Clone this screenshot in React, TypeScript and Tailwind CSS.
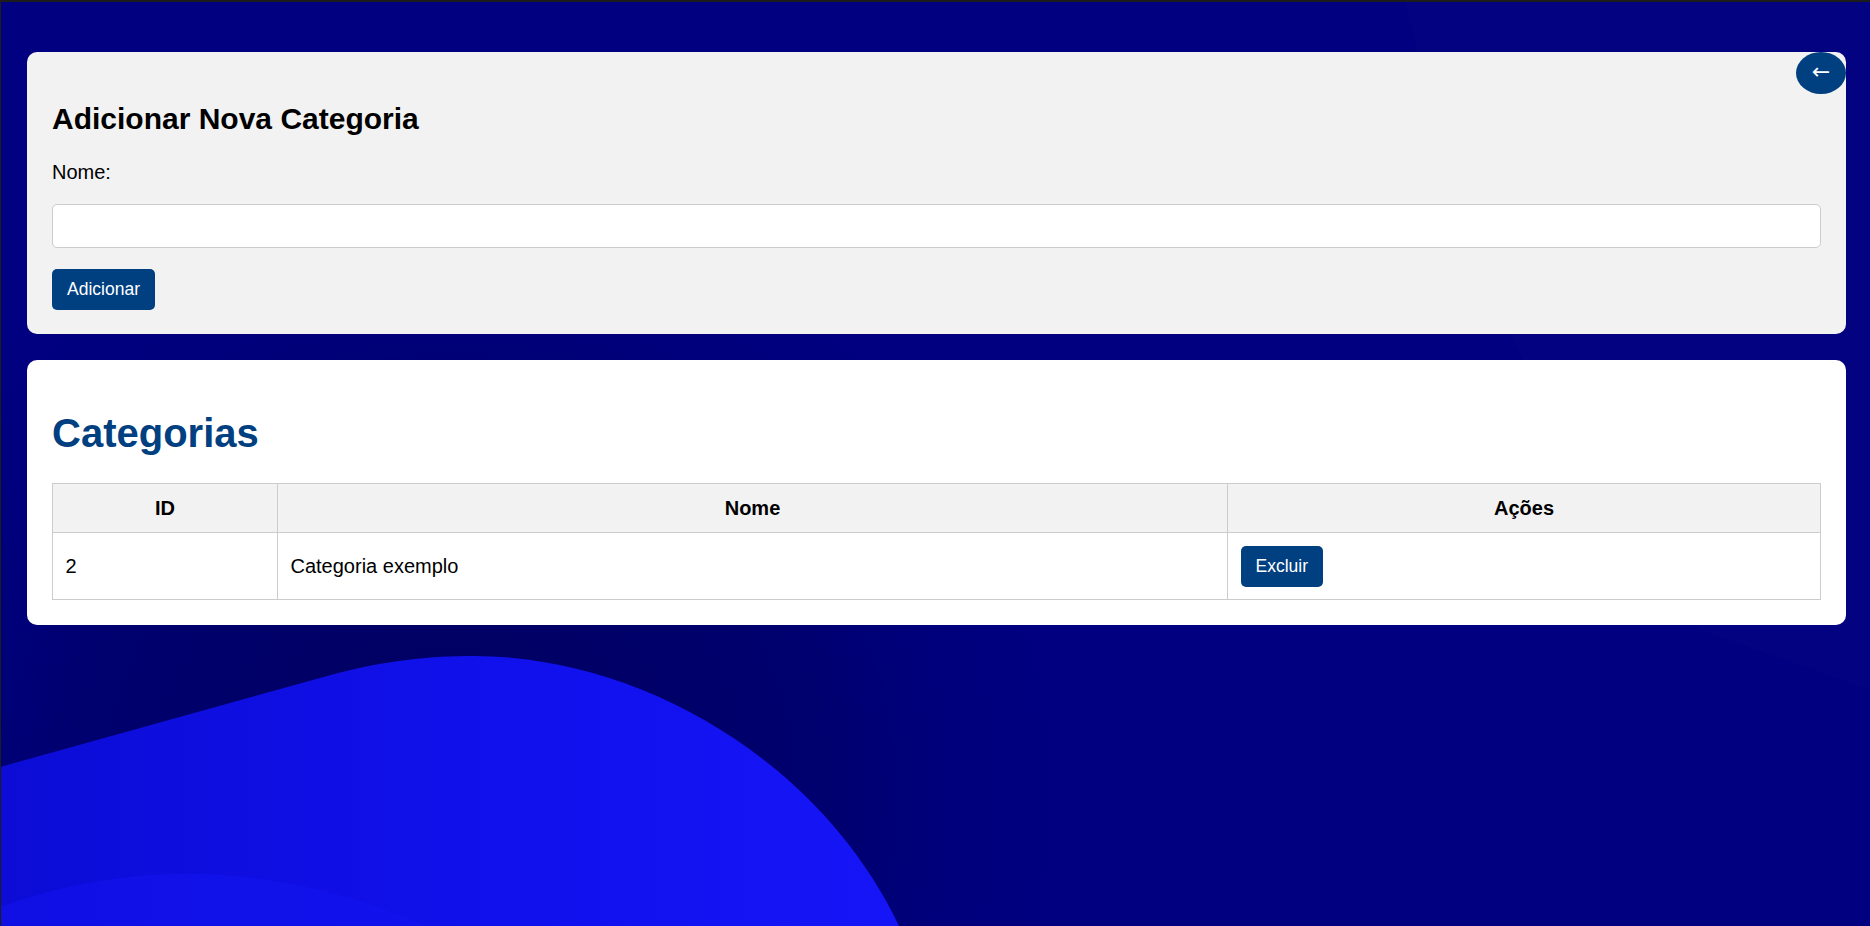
import { useState } from 'react';

type Categoria = { id: number; nome: string };

function Background() {
  return (
    <svg
      className="absolute inset-0 h-full w-full"
      viewBox="1 2 1869 924"
      preserveAspectRatio="none"
      aria-hidden="true"
    >
      <defs>
        <radialGradient id="shade" cx="450" cy="800" r="640" gradientUnits="userSpaceOnUse">
          <stop offset="0" stopColor="#00005c" stopOpacity="1" />
          <stop offset="0.6" stopColor="#000068" stopOpacity="0.7" />
          <stop offset="1" stopColor="#000080" stopOpacity="0" />
        </radialGradient>
        <linearGradient id="blob" x1="0" y1="0" x2="900" y2="0" gradientUnits="userSpaceOnUse">
          <stop offset="0" stopColor="#0c0cd6" />
          <stop offset="0.6" stopColor="#1111ee" />
          <stop offset="1" stopColor="#1515f7" />
        </linearGradient>
      </defs>
      <rect x="0" y="0" width="1870" height="926" fill="#000080" />
      <path d="M1405 0 Q1500 420 1700 630 L1870 690 L1870 0 Z" fill="#ffffff" opacity="0.01" />
      <rect x="0" y="0" width="1870" height="926" fill="url(#shade)" />
      <path
        d="M0 767 L338 673 C390 660 430 656 474 656 C640 656 820 760 899 926 L0 926 Z"
        fill="url(#blob)"
      />
      <path d="M0 907 Q208 832 427 926 L0 926 Z" fill="#1414f0" opacity="0.55" />
    </svg>
  );
}

export default function App() {
  const [nome, setNome] = useState('');
  const [categorias, setCategorias] = useState<Categoria[]>([{ id: 2, nome: 'Categoria exemplo' }]);

  const adicionar = () => {
    if (!nome.trim()) return;
    const proximoId = categorias.reduce((m, c) => Math.max(m, c.id), 0) + 1;
    setCategorias([...categorias, { id: proximoId, nome: nome.trim() }]);
    setNome('');
  };

  const excluir = (id: number) => setCategorias(categorias.filter((c) => c.id !== id));

  return (
    <div className="relative min-h-[926px] overflow-hidden border-t-2 border-l border-t-[#1c1c1c] border-l-[#1e1e14] font-['Liberation_Sans',Arial,sans-serif] text-black">
      <Background />

      {/* voltar */}
      <button className="absolute top-[50px] right-[24px] z-20 flex h-[42px] w-[50px] items-center justify-center rounded-[50%] bg-[#004080] pb-[2px] font-['DejaVu_Sans',sans-serif] text-[22px] leading-none text-white">
        ←
      </button>

      <div className="relative z-10 flex flex-col gap-[26px] pt-[50px] pr-[24px] pl-[26px]">
        {/* formulário */}
        <div className="rounded-[10px] bg-[#f2f2f2] px-[25px] pt-[50px] pb-[24px]">
          <h2 className="text-[30px] leading-[34px] font-bold">Adicionar Nova Categoria</h2>
          <label className="mt-[25px] block text-[20px] leading-[23px]">Nome:</label>
          <input
            value={nome}
            onChange={(e) => setNome(e.target.value)}
            className="mt-[20px] block h-[44px] w-full rounded-[5px] border border-[#cccccc] bg-white px-[12px] text-[20px] outline-none"
          />
          <button
            onClick={adicionar}
            className="mt-[21px] h-[41px] rounded-[5px] bg-[#004080] px-[15px] text-[17.5px] text-white"
          >
            Adicionar
          </button>
        </div>

        {/* lista */}
        <div className="rounded-[10px] bg-white px-[25px] pt-[50px] pb-[25px]">
          <h1 className="text-[40px] leading-[46px] font-bold text-[#004080]">Categorias</h1>
          <table className="mt-[27px] w-full border-collapse text-[20px] leading-[23px]">
            <thead>
              <tr className="bg-[#f2f2f2]">
                <th className="w-[225px] border border-[#cccccc] p-[12.5px] text-center font-bold">ID</th>
                <th className="w-[950px] border border-[#cccccc] p-[12.5px] text-center font-bold">Nome</th>
                <th className="border border-[#cccccc] p-[12.5px] text-center font-bold">Ações</th>
              </tr>
            </thead>
            <tbody>
              {categorias.map((c) => (
                <tr key={c.id}>
                  <td className="border border-[#cccccc] p-[12.5px] align-middle">{c.id}</td>
                  <td className="border border-[#cccccc] p-[12.5px] align-middle">{c.nome}</td>
                  <td className="border border-[#cccccc] p-[12.5px] align-middle">
                    <button
                      onClick={() => excluir(c.id)}
                      className="block h-[41px] rounded-[5px] bg-[#004080] px-[15px] text-[17.5px] text-white"
                    >
                      Excluir
                    </button>
                  </td>
                </tr>
              ))}
            </tbody>
          </table>
        </div>
      </div>
    </div>
  );
}
